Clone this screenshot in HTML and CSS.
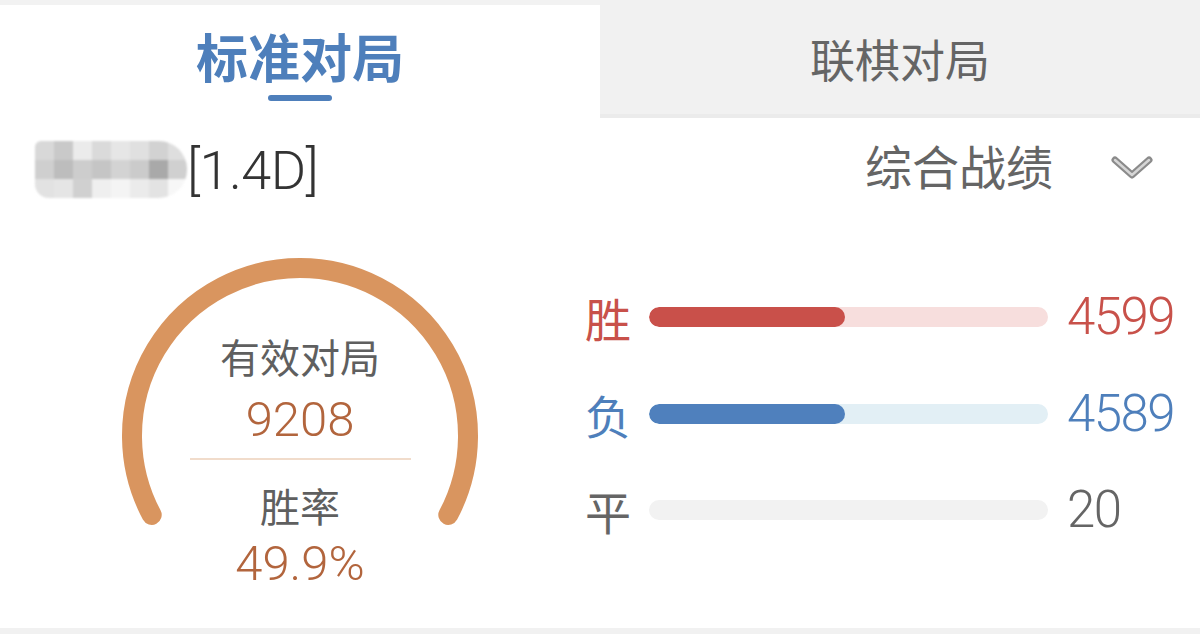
FILE: index.html
```html
<!DOCTYPE html>
<html lang="zh-CN">
<head>
<meta charset="utf-8">
<title>战绩</title>
<link rel="stylesheet" href="styles.css">
</head>
<body>
<div class="page">
  <div class="tabs">
    <div class="tab tab-active">
      <span class="tab-label">标准对局</span>
      <span class="tab-bar"></span>
    </div>
    <div class="tab tab-idle">
      <span class="tab-label">联棋对局</span>
    </div>
  </div>

  <div class="header-row">
    <div class="player">
      <div class="mosaic">
        <i class="c1"></i><i class="c2"></i><i class="c3"></i><i class="c4"></i><i class="c5"></i><i class="c6"></i><i class="c7"></i><i class="c8"></i>
        <i class="c9"></i><i class="c10"></i><i class="c11"></i><i class="c12"></i><i class="c13"></i><i class="c14"></i><i class="c15"></i><i class="c16"></i>
        <i class="c17"></i><i class="c18"></i><i class="c19"></i><i class="c20"></i><i class="c21"></i><i class="c22"></i><i class="c23"></i><i class="c24"></i>
      </div>
      <span class="rank">[1.4D]</span>
    </div>
    <div class="filter">
      <span class="filter-label">综合战绩</span>
      <svg class="chevron" width="42" height="26" viewBox="0 0 42 26">
        <polyline points="4,5 21,20 38,5" fill="none" stroke="#8b8b8b" stroke-width="7" stroke-linecap="round" stroke-linejoin="round"/>
        <polyline points="4,5 21,20 38,5" fill="none" stroke="#d6d6d6" stroke-width="2.5" stroke-linecap="round" stroke-linejoin="round"/>
      </svg>
    </div>
  </div>

  <div class="main">
    <div class="gauge-col">
      <div class="gauge">
        <svg class="gauge-arc" width="360" height="300" viewBox="0 0 360 300">
          <path d="M 31.7 264.9 A 168 168 0 1 1 328.3 264.9" fill="none" stroke="#d9955f" stroke-width="20" stroke-linecap="round"/>
        </svg>
        <div class="gauge-text">
          <span class="g-label">有效对局</span>
          <span class="g-num g-num-1">9208</span>
          <span class="g-divider"></span>
          <span class="g-label g-label-2">胜率</span>
          <span class="g-num g-num-2">49.9%</span>
        </div>
      </div>
    </div>

    <div class="stats">
      <div class="stat-row win">
        <span class="s-label">胜</span>
        <div class="track"><div class="fill" style="width:49%"></div></div>
        <span class="s-num">4599</span>
      </div>
      <div class="stat-row loss">
        <span class="s-label">负</span>
        <div class="track"><div class="fill" style="width:49%"></div></div>
        <span class="s-num">4589</span>
      </div>
      <div class="stat-row draw">
        <span class="s-label">平</span>
        <div class="track"><div class="fill" style="width:0%"></div></div>
        <span class="s-num">20</span>
      </div>
    </div>
  </div>

  <div class="bottom-strip"></div>
</div>
</body>
</html>
```

FILE: styles.css
```css
html, body {
  margin: 0;
  padding: 0;
  background: #ffffff;
}

.page {
  width: 1200px;
  height: 634px;
  overflow: hidden;
  font-family: "Noto Sans CJK SC", "Noto Sans", sans-serif;
  display: flex;
  flex-direction: column;
}

/* Tabs */
.tabs {
  display: grid;
  grid-template-columns: 600px 600px;
  height: 118px;
  background: #f2f2f2;
}

.tab {
  display: flex;
  flex-direction: column;
  align-items: center;
}

.tab-active {
  background: #ffffff;
  margin-top: 5px;
  padding-top: 20px;
}

.tab-active .tab-label {
  font-size: 52px;
  font-weight: 700;
  color: #4e7fbb;
  line-height: 62px;
  height: 62px;
}

.tab-bar {
  display: block;
  width: 64px;
  height: 6px;
  border-radius: 3px;
  background: #4e7fbb;
  margin-top: 8px;
}

.tab-idle {
  background: #f1f1f1;
  border-bottom: 4px solid #ebebeb;
  padding-top: 29px;
}

.tab-idle .tab-label {
  font-size: 45px;
  font-weight: 400;
  color: #656565;
  line-height: 60px;
}

/* Header row */
.header-row {
  height: 107px;
  display: flex;
  align-items: center;
  justify-content: space-between;
  padding: 0 47px 8px 35px;
  box-sizing: border-box;
}

.player {
  display: flex;
  align-items: center;
}

.mosaic {
  display: grid;
  grid-template-columns: repeat(8, 19px);
  grid-template-rows: repeat(3, 19px);
  border-radius: 6px 28px 28px 14px;
  overflow: hidden;
  filter: blur(1px);
  margin-right: 0;
  margin-top: 4px;
}

.mosaic i { display: block; }
.c1 { background: #d8d8d8; } .c2 { background: #c9c9c9; } .c3 { background: #ebebeb; } .c4 { background: #dadada; }
.c5 { background: #e6e6e6; } .c6 { background: #e0e0e0; } .c7 { background: #d2d2d2; } .c8 { background: #dedede; }
.c9 { background: #cfcfcf; } .c10 { background: #bdbdbd; } .c11 { background: #cdcdcd; } .c12 { background: #c5c5c5; }
.c13 { background: #d3d3d3; } .c14 { background: #cbcbcb; } .c15 { background: #a9a9a9; } .c16 { background: #d0d0d0; }
.c17 { background: #e2e2e2; } .c18 { background: #e5e5e5; } .c19 { background: #d0d0d0; } .c20 { background: #efefef; }
.c21 { background: #f4f4f4; } .c22 { background: #ebebeb; } .c23 { background: #e3e3e3; } .c24 { background: #f7f7f7; }

.rank {
  font-family: Roboto, "Liberation Sans", sans-serif;
  font-size: 54px;
  font-weight: 300;
  color: #333333;
  line-height: 60px;
  letter-spacing: -0.5px;
  margin-top: 6px;
}

.filter {
  display: flex;
  align-items: center;
}

.filter-label {
  font-size: 47px;
  color: #656565;
  line-height: 60px;
  margin-bottom: 5px;
}

.chevron {
  margin-left: 58px;
  margin-top: 0;
}

/* Main */
.main {
  height: 403px;
  display: flex;
}

.gauge-col {
  width: 480px;
  padding-left: 120px;
  box-sizing: border-box;
  padding-top: 25px;
}

.gauge {
  position: relative;
  width: 360px;
  height: 350px;
}

.gauge-arc {
  position: absolute;
  left: 0;
  top: 0;
}

.gauge-text {
  position: relative;
  display: flex;
  flex-direction: column;
  align-items: center;
  padding-top: 81px;
}

.g-label {
  font-size: 40px;
  color: #5f5f5f;
  line-height: 50px;
}

.g-num {
  font-family: Roboto, "Liberation Sans", sans-serif;
  font-size: 49px;
  font-weight: 300;
  color: #b2653d;
  line-height: 50px;
}

.g-num-1 { margin-top: 14px; }

.g-divider {
  display: block;
  width: 221px;
  height: 2px;
  background: #f1dccb;
  margin-top: 13px;
}

.g-label-2 { margin-top: 20px; }
.g-num-2 { margin-top: 9px; }

/* Stats */
.stats {
  margin-left: 105px;
  padding-top: 44px;
  display: flex;
  flex-direction: column;
}

.stat-row {
  height: 96.5px;
  display: grid;
  grid-template-columns: 45px 399px auto;
  column-gap: 19px;
  align-items: center;
}

.s-label {
  font-size: 46px;
  line-height: 60px;
}

.track {
  height: 20px;
  border-radius: 10px;
  overflow: hidden;
}

.fill {
  height: 100%;
  border-radius: 10px;
}

.s-num {
  font-family: Roboto, "Liberation Sans", sans-serif;
  font-size: 51px;
  font-weight: 300;
  line-height: 60px;
  letter-spacing: -1.5px;
}

.win .s-label, .win .s-num { color: #c8514a; }
.win .track { background: #f7dedd; }
.win .fill { background: #c9504a; }

.loss .s-label, .loss .s-num { color: #4e7fbb; }
.loss .track { background: #e2eff5; }
.loss .fill { background: #4f80bd; }

.draw .s-label, .draw .s-num { color: #656565; }
.draw .track { background: #f2f2f2; }
.draw .fill { background: #cccccc; }

.bottom-strip {
  height: 6px;
  background: #f1f1f1;
}
```
